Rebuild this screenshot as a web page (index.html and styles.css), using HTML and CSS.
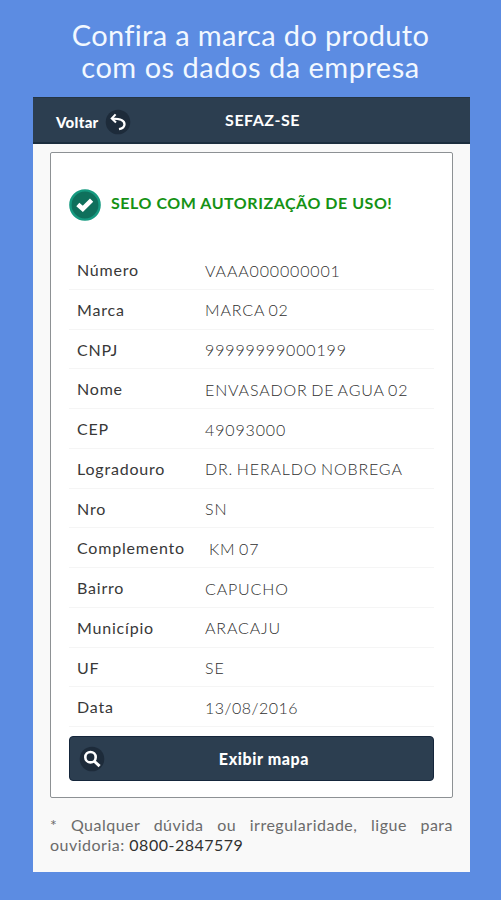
FILE: index.html
```
<!DOCTYPE html>
<html lang="pt-br">

<head>
    <meta charset="UTF-8">
    <meta name="viewport" content="width=device-width, initial-scale=1.0">
    <title>SEFAZ-SE</title>
    <link rel="stylesheet" href="styles.css">
</head>

<body>
    <h1 class="slogan">
        <span class="line1">Confira a marca do produto</span>
        <span class="line2">com os dados da empresa</span>
    </h1>

    <div class="app">
        <div class="header">
            <a class="back">
                <span>Voltar</span>
                <svg class="icon" viewBox="0 0 26 26">
                    <circle cx="13" cy="13" r="12.3" fill="#1d2b3a" />
                    <path d="M7.5 9.6C12 9.6 19.5 10.3 19.5 15.2C19.5 18 17 19.6 14 20.2" fill="none" stroke="#fff" stroke-width="2.3" />
                    <path d="M10.6 5.4L6.8 9.4L11 13.4" fill="none" stroke="#fff" stroke-width="2.1" />
                </svg>
            </a>
            <span class="title">SEFAZ-SE</span>
        </div>

        <div class="content">
            <div class="card">
                <div class="status">
                    <svg class="check" viewBox="0 0 32 32">
                        <circle cx="16" cy="16" r="14.6" fill="#0f705c" stroke="#169a80" stroke-width="2.4" />
                        <path d="M8.8 15.4L13.8 19.8L22.6 11.2" fill="none" stroke="#fff" stroke-width="4.6" />
                    </svg>
                    <span>SELO COM AUTORIZAÇÃO DE USO!</span>
                </div>

                <ul class="list">
                    <li><b>Número</b><span>VAAA000000001</span></li>
                    <li><b>Marca</b><span>MARCA 02</span></li>
                    <li><b>CNPJ</b><span>99999999000199</span></li>
                    <li><b>Nome</b><span>ENVASADOR DE AGUA 02</span></li>
                    <li><b>CEP</b><span>49093000</span></li>
                    <li><b>Logradouro</b><span>DR. HERALDO NOBREGA</span></li>
                    <li><b>Nro</b><span>SN</span></li>
                    <li><b>Complemento</b><span class="indent">KM 07</span></li>
                    <li><b>Bairro</b><span>CAPUCHO</span></li>
                    <li><b>Município</b><span>ARACAJU</span></li>
                    <li><b>UF</b><span>SE</span></li>
                    <li><b>Data</b><span class="date">13/08/2016</span></li>
                </ul>

                <a class="btn">
                    <svg class="icon" viewBox="0 0 26 26">
                        <circle cx="13" cy="13" r="12.3" fill="#1d2b3a" />
                        <circle cx="11.5" cy="11.2" r="5.2" fill="none" stroke="#fff" stroke-width="2.6" />
                        <path d="M15 15L20.6 20.2" stroke="#fff" stroke-width="3" />
                    </svg>
                    <span>Exibir mapa</span>
                </a>
            </div>

            <p class="note">* Qualquer dúvida ou irregularidade, ligue para ouvidoria: <a>0800-2847579</a></p>
        </div>
    </div>
</body>

</html>
```
FILE: styles.css
```
* {
    box-sizing: border-box;
}

body {
    margin: 0;
    height: 900px;
    background-color: #5c8ce2;
    font-family: Lato, "Open Sans", sans-serif;
    overflow: hidden;
}

.slogan {
    margin: 0;
    height: 97px;
    padding-top: 19px;
    color: #f2f8ff;
    font-size: 29px;
    font-weight: 400;
    line-height: 32px;
    text-align: center;
}

.slogan span {
    display: block;
}

.line1 {
    letter-spacing: 0.35px;
}

.line2 {
    letter-spacing: 0.5px;
}

.app {
    width: 437px;
    height: 775px;
    margin-left: 33px;
    background-color: #f9f9f9;
}

.header {
    height: 47px;
    display: grid;
    grid-template-columns: 115px 1fr 93px;
    background-color: #2c3e50;
    border-bottom: 2px solid #1c2e3e;
    border-top: 1px solid #243544;
    color: #fff;
}

.back {
    display: flex;
    align-items: center;
    gap: 6px;
    padding: 4px 0 0 23px;
    font-size: 15px;
    font-weight: 900;
    letter-spacing: 0.3px;
}

.icon {
    width: 26px;
    height: 26px;
    flex: none;
}

.title {
    padding-top: 12px;
    line-height: 20px;
    text-align: center;
    font-size: 16px;
    font-weight: 700;
    letter-spacing: 0.5px;
}

.content {
    padding: 8px 17px 0;
}

.card {
    height: 646px;
    padding: 36px 18px 0;
    background-color: #fff;
    border: 1px solid #8d9194;
    border-radius: 2px;
}

.status {
    display: flex;
    gap: 10px;
    height: 61px;
    color: #159215;
    font-size: 16px;
    font-weight: 700;
    line-height: 27px;
    letter-spacing: 0.54px;
    white-space: nowrap;
}

.check {
    width: 32px;
    height: 32px;
    flex: none;
}

.list {
    list-style: none;
    margin: 0;
    padding: 0;
}

.list li {
    display: flex;
    height: 39.75px;
    padding-left: 8px;
    border-bottom: 1px solid #f5f5f5;
    font-size: 16px;
    line-height: 40px;
    white-space: nowrap;
}

.list b {
    width: 128px;
    color: #383838;
    font-weight: 400;
    letter-spacing: 0.8px;
}

.list span {
    padding-top: 0.5px;
    color: #303030;
    font-weight: 300;
    letter-spacing: 0.85px;
    word-spacing: -1.5px;
}

.list .indent {
    padding-left: 4px;
}

.list .date {
    letter-spacing: 0.5px;
}

.btn {
    display: flex;
    align-items: center;
    height: 45px;
    margin-top: 9px;
    padding-left: 9px;
    background-color: #2c3e50;
    border: 1px solid #15263b;
    border-radius: 4px;
    color: #fff;
    font-size: 16px;
    font-weight: 900;
    letter-spacing: 0.6px;
}

.btn span {
    flex: 1;
    padding-right: 10px;
    text-align: center;
}

.note {
    margin: 17px 0 0;
    color: #6b6b6b;
    font-size: 16px;
    line-height: 20px;
    letter-spacing: 0.5px;
    text-align: justify;
}

.note a {
    color: #303030;
}
```
